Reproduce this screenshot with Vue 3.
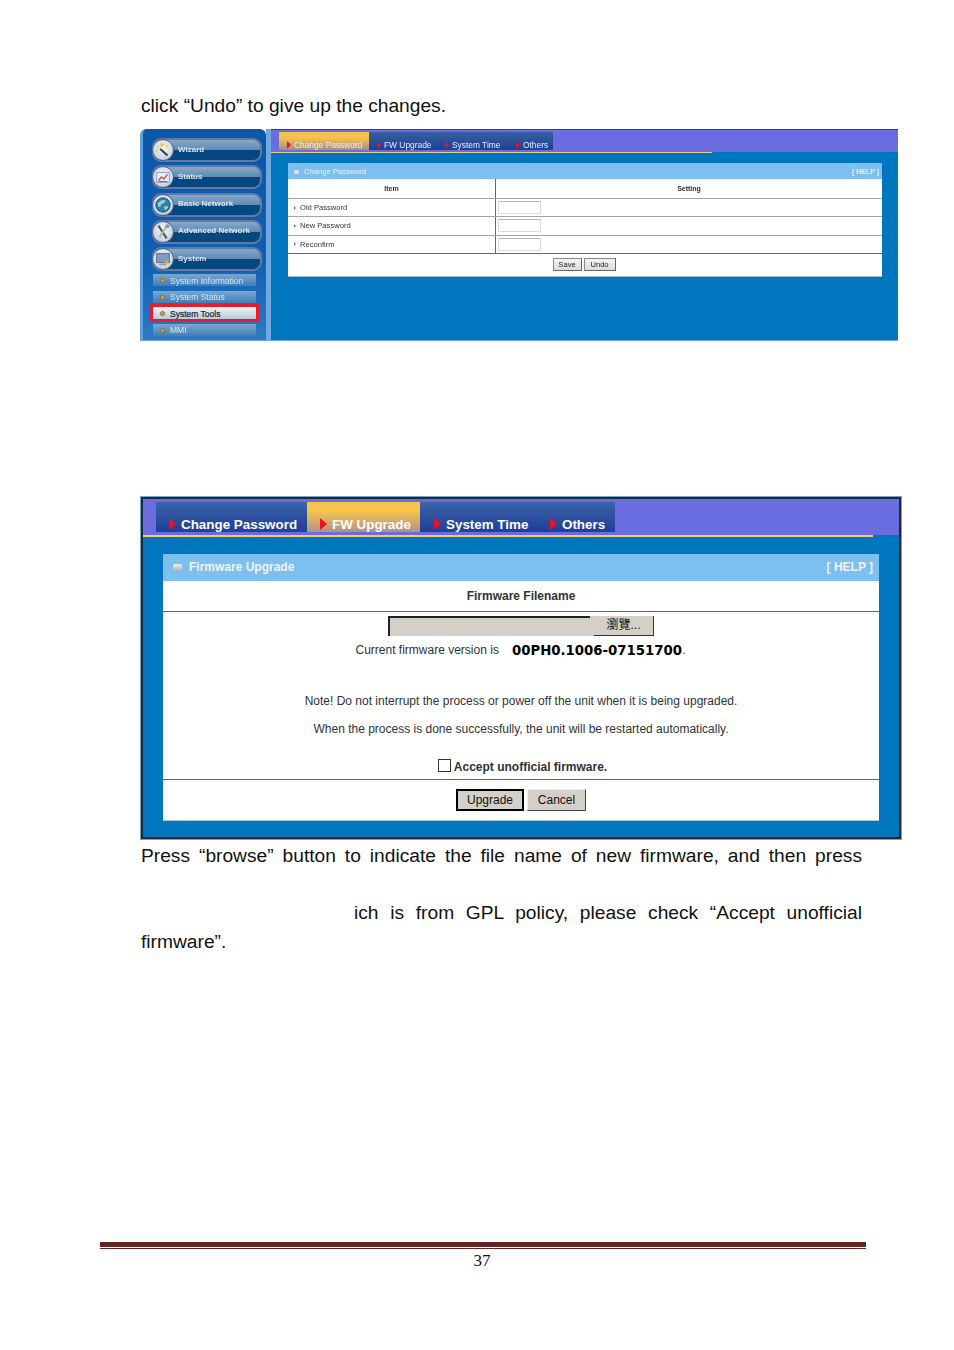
<script setup>
const navItems = [
  { label: 'Wizard', icon: 'wand' },
  { label: 'Status', icon: 'chart' },
  { label: 'Basic Network', icon: 'globe' },
  { label: 'Advanced Network', icon: 'tools' },
  { label: 'System', icon: 'monitor' }
]
const subItems = [
  { label: 'System Information' },
  { label: 'System Status' },
  { label: 'System Tools', active: true },
  { label: 'MMI' }
]
const smallTabs = [
  { label: 'Change Password', active: true },
  { label: 'FW Upgrade' },
  { label: 'System Time' },
  { label: 'Others' }
]
const bigTabs = [
  { label: 'Change Password', w: 151 },
  { label: 'FW Upgrade', w: 113, active: true },
  { label: 'System Time', w: 117 },
  { label: 'Others', w: 78 }
]
const rows = ['Old Password', 'New Password', 'Reconfirm']
</script>

<template>
  <div class="page">
    <p class="line-top">click “Undo” to give up the changes.</p>

    <section class="shot-a">
      <aside class="side">
        <div v-for="n in navItems" :key="n.label" class="nav">
          <span class="nav-icon">
            <svg viewBox="0 0 20 20" width="18" height="18">
              <template v-if="n.icon === 'wand'">
                <path d="M4 6 L15 16" stroke="#3a3a3a" stroke-width="2.2" />
                <path d="M4 6 L7 8.8" stroke="#f0f0f0" stroke-width="2.2" />
                <path d="M9 1 l.9 2.4 2.4 .9 -2.4 .9 -.9 2.4 -.9 -2.4 -2.4 -.9 2.4 -.9z" fill="#f2c230" />
                <circle cx="3" cy="11" r="1.2" fill="#f2c230" />
                <circle cx="14" cy="6" r="1.2" fill="#f2c230" />
              </template>
              <template v-else-if="n.icon === 'chart'">
                <rect x="3" y="5" width="14" height="11" fill="#e8ecf5" stroke="#8d9bbd" />
                <path d="M5 14 L8 10 L11 12 L15 7" stroke="#c8443a" stroke-width="1.4" fill="none" />
                <path d="M5 15 L15 15" stroke="#5c7cb0" stroke-width="1.2" />
              </template>
              <template v-else-if="n.icon === 'globe'">
                <circle cx="10" cy="10" r="8" fill="#2f7fb8" stroke="#174f7c" />
                <path d="M4 8 q5 -5 9 -3 q-2 4 -5 4 q0 4 -3 3z M11 12 q4 -2 5 0 q-2 4 -4 3z" fill="#9fd3c0" />
              </template>
              <template v-else-if="n.icon === 'tools'">
                <path d="M5 3 L14 17" stroke="#5a5a5a" stroke-width="2.4" />
                <path d="M15 2 L6 16" stroke="#aab2ba" stroke-width="2.2" />
                <circle cx="15" cy="3.5" r="2.2" fill="#8f98a2" />
              </template>
              <template v-else>
                <rect x="3" y="4" width="14" height="10" fill="#7d9bc8" stroke="#667" />
                <rect x="6" y="15" width="8" height="2" fill="#99a" />
                <path d="M11 12 l6 0 -3 4z" fill="#e8a818" />
              </template>
            </svg>
          </span>
          <span class="nav-label">{{ n.label }}</span>
        </div>
        <div class="subs">
          <div v-for="s in subItems" :key="s.label" class="sub" :class="{ 'sub-on': s.active }">
            <span class="sub-dot"></span>{{ s.label }}
          </div>
        </div>
      </aside>
      <div class="seam"></div>
      <div class="main-a">
        <div class="bar-a">
          <div class="tabs-a">
            <div v-for="t in smallTabs" :key="t.label" class="tab-a" :class="{ 'tab-a-on': t.active }">
              <span class="arrow-a"></span>{{ t.label }}
            </div>
          </div>
        </div>
        <div class="rule-a"></div>
        <div class="card-a">
          <div class="head-a">
            <span><span class="bullet-a"></span>Change Password</span>
            <span class="help-a">[ HELP ]</span>
          </div>
          <div class="row-a row-a-h">
            <div class="col-l center">Item</div>
            <div class="col-r center">Setting</div>
          </div>
          <div v-for="r in rows" :key="r" class="row-a">
            <div class="col-l"><span class="mini-arrow"></span>{{ r }}</div>
            <div class="col-r"><span class="inp-a"></span></div>
          </div>
          <div class="foot-a">
            <span class="btn-a">Save</span><span class="btn-a btn-a2">Undo</span>
          </div>
        </div>
      </div>
    </section>

    <section class="shot-b">
      <div class="bar-b">
        <div class="tabs-b">
          <div
            v-for="t in bigTabs"
            :key="t.label"
            class="tab-b"
            :class="{ 'tab-b-on': t.active }"
            :style="{ width: t.w + 'px' }"
          >
            <span class="arrow-b"></span>{{ t.label }}
          </div>
        </div>
      </div>
      <div class="rule-b"></div>
      <div class="card-b">
        <div class="head-b">
          <span class="head-b-l"><span class="bullet-b"></span>Firmware Upgrade</span>
          <span>[ HELP ]</span>
        </div>
        <div class="fname">Firmware Filename</div>
        <div class="body-b">
          <div class="file">
            <span class="file-in"></span>
            <span class="file-gap"></span>
            <span class="file-btn">瀏覽...</span>
          </div>
          <div class="ver">
            <span>Current firmware version is</span>
            <b class="ver-num">00PH0.1006-07151700</b><span>.</span>
          </div>
          <p class="note n1">Note! Do not interrupt the process or power off the unit when it is being upgraded.</p>
          <p class="note n2">When the process is done successfully, the unit will be restarted automatically.</p>
          <div class="accept"><span class="check"></span><b>Accept unofficial firmware.</b></div>
        </div>
        <div class="foot-b">
          <span class="btn-b btn-b-def">Upgrade</span>
          <span class="btn-b">Cancel</span>
        </div>
      </div>
    </section>

    <p class="para first">Press “browse” button to indicate the file name of new firmware, and then press</p>
    <p class="para second">ich is from GPL policy, please check “Accept unofficial</p>
    <p class="para third">firmware”.</p>

    <footer class="foot">
      <div class="foot-thick"></div>
      <div class="foot-thin"></div>
      <div class="foot-num">37</div>
    </footer>
  </div>
</template>

<style>
html, body { margin: 0; background: #fff; }
</style>

<style scoped>
.page {
  width: 954px;
  height: 1350px;
  overflow: hidden;
  background: #fff;
  font-family: "Liberation Sans", Arial, sans-serif;
  color: #111;
  box-sizing: border-box;
  padding-top: 94px;
}
p { margin: 0; }
.line-top {
  margin-left: 141px;
  font-size: 19.2px;
  line-height: 23px;
}

/* first screenshot */
.shot-a {
  margin: 12px 0 0 140px;
  width: 758px;
  height: 212px;
  display: flex;
  border-bottom: 1px solid #6fa9df;
  box-sizing: border-box;
}
.side {
  width: 126px;
  box-sizing: border-box;
  padding: 9px 0 0 9px;
  border-radius: 6px 6px 0 0;
  background: linear-gradient(180deg, #0b57a8 0%, #0d5fb2 60%, #2f78c4 100%);
  border-left: 3px solid #5f9fdc;
}
.nav {
  width: 110px;
  height: 24px;
  margin-bottom: 3.3px;
  box-sizing: border-box;
  border: 2px solid #66789f;
  border-radius: 9px;
  background: linear-gradient(180deg, #86a9ca 0%, #5f8cb4 48%, #05487f 52%, #05487f 100%);
  display: flex;
  align-items: center;
  color: #d9e6f2;
  font-size: 8px;
  font-weight: bold;
  filter: blur(0.25px);
}
.nav-icon {
  width: 22px;
  height: 22px;
  margin-left: -2px;
  border-radius: 50%;
  background: radial-gradient(circle at 50% 40%, #f4f6f8 0%, #c9d4de 70%, #8ea3ba 100%);
  border: 1px solid #4a6288;
  box-sizing: border-box;
  display: flex;
  align-items: center;
  justify-content: center;
  flex: none;
}
.nav-label { margin-left: 4px; margin-top: -2px; white-space: nowrap; }
.subs { margin-top: 1px; margin-left: 1px; }
.sub {
  width: 103px;
  height: 12px;
  margin-bottom: 4.4px;
  background: linear-gradient(180deg, #7ba8cf 0%, #3f7fb8 100%);
  color: #d8e6f2;
  font-size: 8.5px;
  line-height: 12px;
  padding-top: 1px;
  box-sizing: border-box;
  display: flex;
  align-items: center;
  white-space: nowrap;
  filter: blur(0.2px);
}
.sub-on {
  background: linear-gradient(180deg, #f2f5f6 0%, #b6cbd8 100%);
  color: #16263a;
  outline: 3px solid #ea1c2c;
  outline-offset: 0;
  -webkit-text-stroke: 0.2px #16263a;
  filter: none;
}
.sub-dot {
  width: 5px;
  height: 5px;
  border-radius: 50%;
  background: #d8a04a;
  border: 1px solid #8a6a3a;
  box-sizing: border-box;
  margin: 0 5px 0 7px;
  flex: none;
}
.seam { width: 5px; background: #6fa9df; }
.main-a { flex: 1; background: #0076be; }
.bar-a {
  height: 23px;
  box-sizing: border-box;
  border-top: 1px solid #3c3f78;
  background: #6a6de0;
  padding: 2px 0 0 8px;
}
.tabs-a { display: flex; height: 18px; width: 274px; background: linear-gradient(180deg, #35609f 0%, #1f3f95 100%); }
.tab-a {
  flex: none;
  color: #e6ecf6;
  font-size: 8.4px;
  padding-top: 7px;
  box-sizing: border-box;
  white-space: nowrap;
  display: flex;
  align-items: center;
  filter: blur(0.2px);
}
.tab-a:nth-child(1) { width: 90px; padding-left: 8px; }
.tab-a:nth-child(2) { width: 69px; padding-left: 8px; }
.tab-a:nth-child(3) { width: 71px; padding-left: 7px; }
.tab-a:nth-child(4) { width: 44px; padding-left: 7px; }
.tab-a-on { background: linear-gradient(180deg, #f4c04e 0%, #f4c04e 35%, #a58e88 100%); }
.arrow-a {
  width: 0; height: 0;
  border-left: 4px solid #e8141e;
  border-top: 4px solid transparent;
  border-bottom: 4px solid transparent;
  margin-right: 3px;
  flex: none;
}
.rule-a { width: 441px; height: 1px; background: #e9cf88; }
.card-a {
  margin: 10px 0 0 17px;
  width: 594px;
  background: #fff;
  font-size: 7.6px;
  color: #333;
  filter: blur(0.15px);
}
.head-a {
  height: 16px;
  background: #7dbfee;
  color: #e8f3fb;
  display: flex;
  justify-content: space-between;
  align-items: center;
  padding: 0 3px 0 6px;
}
.bullet-a {
  display: inline-block;
  width: 5px;
  height: 4px;
  background: #d9dee2;
  margin-right: 5px;
  border-radius: 1px;
}
.help-a { font-weight: bold; font-size: 7px; }
.row-a {
  display: flex;
  height: 18.3px;
  box-sizing: border-box;
  border-top: 1px solid #a4a4a4;
}
.row-a-h { border-top: 0; height: 19px; font-weight: bold; font-size: 7px; }
.col-l {
  width: 207px;
  box-sizing: border-box;
  padding-left: 6px;
  display: flex;
  align-items: center;
}
.col-r {
  flex: 1;
  border-left: 1px solid #666;
  padding-left: 2px;
  display: flex;
  align-items: center;
}
.center { justify-content: center; padding-left: 0; }
.mini-arrow {
  width: 0; height: 0;
  border-left: 2px solid #2b9aa0;
  border-top: 2px solid transparent;
  border-bottom: 2px solid transparent;
  margin-right: 4px;
}
.inp-a {
  width: 43px;
  height: 13px;
  box-sizing: border-box;
  border: 1px solid #dcdcdc;
  border-top-color: #b8b8b8;
  background: #fff;
}
.foot-a {
  height: 24px;
  box-sizing: border-box;
  border-top: 1px solid #666;
  border-bottom: 1px solid #a8b8c8;
  display: flex;
  justify-content: center;
  align-items: center;
  padding-right: 2px;
}
.btn-a {
  height: 13px;
  width: 29px;
  box-sizing: border-box;
  border: 1px solid #888;
  border-right-color: #666;
  border-bottom-color: #666;
  background: linear-gradient(180deg, #f4f4f4, #dcdcdc);
  font-size: 7.6px;
  line-height: 11px;
  text-align: center;
  color: #222;
}
.btn-a2 { width: 32px; margin-left: 2px; }

/* second screenshot */
.shot-b {
  margin: 156px 0 0 141px;
  width: 760px;
  height: 342px;
  box-sizing: border-box;
  border: 2px solid #23282d;
  outline: 1px solid #6aa5d4;
  outline-offset: -0.5px;
  background: #0076be;
}
.bar-b {
  height: 36px;
  box-sizing: border-box;
  background: #6a6de0;
  padding: 3px 0 0 13px;
}
.tabs-b { display: flex; height: 30px; }
.tab-b {
  flex: none;
  box-sizing: border-box;
  display: flex;
  align-items: flex-end;
  padding-left: 13px;
  color: #fff;
  font-size: 13.4px;
  font-weight: bold;
  line-height: 15px;
  white-space: nowrap;
  background: linear-gradient(180deg, #3c63a8 0%, #1f3e98 100%);
}
.tab-b:nth-child(3) { padding-left: 14px; }
.tab-b-on { background: linear-gradient(180deg, #f5c44e 0%, #f5c44e 30%, #b09285 100%); }
.arrow-b {
  width: 0; height: 0;
  border-left: 7px solid #f0101c;
  border-top: 6px solid transparent;
  border-bottom: 6px solid transparent;
  margin: 0 5px 2px 0;
  flex: none;
}
.rule-b {
  width: 730px;
  height: 2px;
  background: #f6cd63;
}
.card-b {
  margin: 17px 0 0 20px;
  width: 716px;
  height: 267px;
  background: #fff;
  box-sizing: border-box;
  border-bottom: 1px solid #b5c6d4;
  font-size: 12px;
  color: #2f3238;
}
.head-b {
  height: 27px;
  background: #7dbfee;
  color: #eef6fc;
  font-weight: bold;
  display: flex;
  justify-content: space-between;
  align-items: center;
  padding: 0 6px 2px 10px;
  box-sizing: border-box;
}
.bullet-b {
  display: inline-block;
  width: 9px;
  height: 7px;
  margin-right: 7px;
  border-radius: 2px;
  background: linear-gradient(180deg, #eceff1, #aab2b8);
}
.fname {
  height: 31px;
  box-sizing: border-box;
  border-bottom: 1px solid #666;
  text-align: center;
  font-weight: bold;
  line-height: 30px;
  color: #333;
}
.body-b {
  height: 168px;
  box-sizing: border-box;
  padding-top: 4px;
  border-bottom: 1px solid #666;
  text-align: center;
}
.file {
  display: flex;
  width: 266px;
  height: 20px;
  margin-left: 225px;
  background: #d4d0c8;
}
.file-in {
  width: 202px;
  border-top: 2px solid #222;
  border-left: 2px solid #222;
  box-sizing: border-box;
}
.file-gap { width: 4px; }
.file-btn {
  width: 60px;
  border-right: 1px solid #333;
  border-bottom: 1px solid #333;
  box-sizing: border-box;
  text-align: center;
  line-height: 18px;
  color: #111;
  font-family: "Liberation Sans", "Noto Sans CJK TC", sans-serif;
}
.ver {
  margin-top: 3px;
  height: 22px;
  display: flex;
  justify-content: center;
  align-items: center;
  padding-right: 1px;
}
.ver-num {
  margin-left: 13px;
  font-family: "DejaVu Sans", sans-serif;
  font-size: 13.3px;
  color: #000;
}
.note { line-height: 16px; }
.n1 { margin-top: 32px; }
.n2 { margin-top: 12px; }
.accept {
  margin-top: 21px;
  height: 16px;
  display: flex;
  justify-content: center;
  align-items: flex-end;
  font-size: 12px;
  color: #2f3238;
  padding-left: 3px;
}
.check {
  width: 13px;
  height: 13px;
  box-sizing: border-box;
  border: 1px solid #333;
  margin: 0 3px 2px 0;
  background: #fff;
}
.foot-b {
  display: flex;
  justify-content: center;
  align-items: flex-start;
  gap: 3px;
  padding: 9px 0 0 0;
}
.btn-b {
  height: 22px;
  width: 59px;
  box-sizing: border-box;
  background: #d4d0c8;
  border: 1px solid #eee;
  border-right-color: #444;
  border-bottom-color: #444;
  text-align: center;
  line-height: 20px;
  color: #111;
}
.btn-b-def {
  width: 68px;
  border: 2px solid #000;
  line-height: 18px;
}

/* paragraphs */
.para {
  margin-left: 141px;
  width: 721px;
  font-size: 19.2px;
  line-height: 23px;
  text-align: justify;
  text-align-last: justify;
}
.first { margin-top: 5px; }
.second { margin-top: 34px; padding-left: 213px; box-sizing: border-box; }
.third { margin-top: 6px; text-align-last: left; }

/* page footer */
.foot { margin: 289px 0 0 100px; width: 766px; }
.foot-thick { height: 5px; background: #622423; }
.foot-thin { height: 1px; margin-top: 1px; background: #622423; }
.foot-num {
  margin-top: 3px;
  text-align: center;
  margin-left: -2px;
  font-family: "Liberation Serif", serif;
  font-size: 17px;
  line-height: 18px;
  color: #111;
}
</style>
